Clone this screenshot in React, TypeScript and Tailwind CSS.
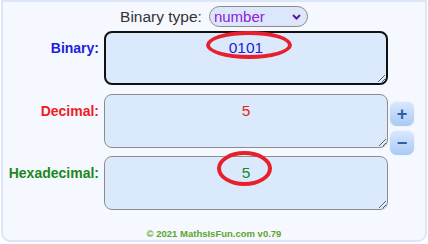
import React from "react";

const font = { fontFamily: '"Liberation Sans", Arial, sans-serif' };

function Ring({ className }: { className: string }) {
  return (
    <div
      className={`pointer-events-none absolute rounded-[50%] border-[4px] border-[#e8202b] ${className}`}
    />
  );
}

function Row({
  label,
  labelColor,
  value,
  textColor,
  focused,
  children,
}: {
  label: string;
  labelColor: string;
  value: string;
  textColor: string;
  focused?: boolean;
  children?: React.ReactNode;
}) {
  return (
    <div className="flex h-[54px] items-start">
      <div className={`w-[96px] pt-[7px] text-right text-[14px] font-bold ${labelColor}`}>
        {label}
      </div>
      <div className="relative ml-[5px]">
        <textarea
          readOnly
          value={value}
          className={`block h-[54px] w-[284px] rounded-[8px] bg-[#dbe9fd] text-center text-[15.5px] outline-none ${textColor} ${
            focused
              ? "border-2 border-[#111] pt-[3px]"
              : "border border-[#8d8d8d] pt-[4px]"
          }`}
          style={font}
        />
        {children}
      </div>
    </div>
  );
}

function StepButton({ sign }: { sign: string }) {
  return (
    <button className="flex h-[24px] w-[24px] items-center justify-center rounded-[7px] bg-gradient-to-b from-[#d9e8ff] to-[#a8c9f6] text-[18px] font-bold leading-none text-[#2f5ea8] shadow-[0_0_1px_#9fbce6]">
      {sign}
    </button>
  );
}

export default function App() {
  return (
    <div className="h-[244px] w-[428px] overflow-hidden bg-white" style={font}>
      <div className="mx-[1px] h-[242px] rounded-b-[9px] border-2 border-[#dbe7f8] bg-[#f5f8fe]">
        <div className="flex items-center justify-center pt-[3px]">
          <span className="text-[15.5px] text-[#333]">Binary type:</span>
          <div className="relative ml-[7px] flex h-[21px] w-[99px] items-center rounded-full border border-[#8a8a8a] bg-[#dde7fb] pl-[4px]">
            <span className="text-[15px] leading-none text-[#8a22d8]">number</span>
            <svg
              className="absolute right-[6px] top-[7px]"
              width="9"
              height="6"
              viewBox="0 0 9 6"
            >
              <path d="M1 1l3.5 3.5L8 1" fill="none" stroke="#5a1a9a" strokeWidth="2" />
            </svg>
          </div>
        </div>

        <div className="mt-[3px] flex flex-col gap-[9px]">
          <Row
            label="Binary:"
            labelColor="text-[#1d1de0]"
            value="0101"
            textColor="text-[#2222dd]"
            focused
          >
            <Ring className="left-[102px] top-[0px] h-[28px] w-[86px]" />
          </Row>
          <div className="flex h-[54px] items-start">
            <Row
              label="Decimal:"
              labelColor="text-[#ee1c25]"
              value="5"
              textColor="text-[#ee1c25]"
            />
            <div className="ml-[2px] mt-[8px] flex flex-col gap-[5px]">
              <StepButton sign="+" />
              <StepButton sign="−" />
            </div>
          </div>
          <div className="-mt-[1px]">
            <Row
              label="Hexadecimal:"
              labelColor="text-[#1a881a]"
              value="5"
              textColor="text-[#1a881a]"
            >
              <Ring className="left-[113px] -top-[5px] h-[35px] w-[55px]" />
            </Row>
          </div>
        </div>

        <div className="mt-[17px] text-center text-[9.5px] font-bold text-[#5ea52a]">
          © 2021 MathsIsFun.com v0.79
        </div>
      </div>
    </div>
  );
}
